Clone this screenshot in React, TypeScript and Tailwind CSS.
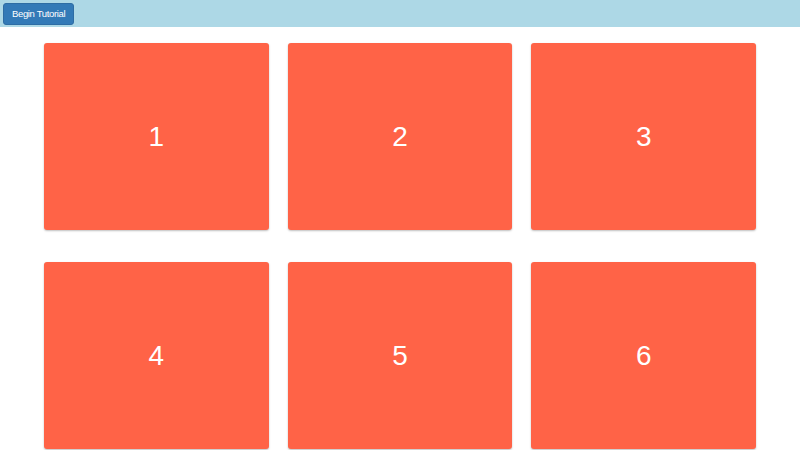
import React from "react";

const tiles = [1, 2, 3, 4, 5, 6];

export default function App() {
    return (
        <div className="min-h-[450px] w-[800px] bg-white font-['Liberation_Sans',Arial,sans-serif]">
            {/* Top bar */}
            <div className="flex h-[27px] items-center bg-[#add8e6] px-[3px]">
                <button className="h-[22px] rounded-[3px] border border-[#2e6da4] bg-[#337ab7] px-[8px] text-[9.5px] leading-none tracking-[-0.35px] text-white">
                    Begin Tutorial
                </button>
            </div>

            {/* Tile grid */}
            <div className="mx-[44px] mt-[16px] grid grid-cols-3 gap-x-[19px] gap-y-[32px]">
                {tiles.map((n) => (
                    <div
                        key={n}
                        className="flex h-[187px] items-center justify-center rounded-[3px] bg-[#ff6347] text-[28px] text-white shadow-[0_1px_2px_rgba(0,0,0,0.25)]"
                    >
                        {n}
                    </div>
                ))}
            </div>
        </div>
    );
}
